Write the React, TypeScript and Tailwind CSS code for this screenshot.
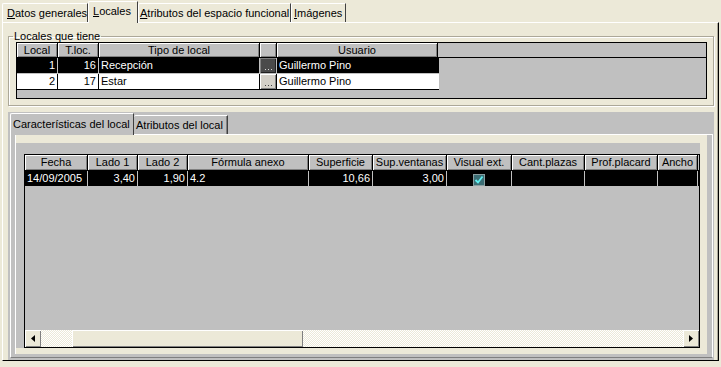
import React from "react";

const raised = "shadow-[inset_1px_1px_0_#ffffff,inset_-1px_-1px_0_#808080]";

const TOP_TABS = [
  { label: "Datos generales", w: "w-[86px] pl-[4px]", active: false },
  { label: "Locales", w: "w-[50px] pl-[4px]", active: true },
  { label: "Atributos del espacio funcional", w: "w-[153px] pl-[1px]", active: false },
  { label: "Imágenes", w: "w-[55px] pl-[2px]", active: false },
];

const LOCAL_COLS = [
  { label: "Local", w: "w-[41px]" },
  { label: "T.loc.", w: "w-[41px]" },
  { label: "Tipo de local", w: "w-[161px]" },
  { label: "", w: "w-[17px]" },
  { label: "Usuario", w: "w-[161px]" },
];

const LOCAL_ROWS = [
  { local: "1", tloc: "16", tipo: "Recepción", user: "Guillermo Pino", sel: true },
  { local: "2", tloc: "17", tipo: "Estar", user: "Guillermo Pino", sel: false },
];

const CAR_COLS = [
  { label: "Fecha", w: "w-[63px]", value: "14/09/2005", align: "text-left" },
  { label: "Lado 1", w: "w-[50px]", value: "3,40", align: "text-right" },
  { label: "Lado 2", w: "w-[50px]", value: "1,90", align: "text-right" },
  { label: "Fórmula anexo", w: "w-[121px]", value: "4.2", align: "text-left" },
  { label: "Superficie", w: "w-[64px]", value: "10,66", align: "text-right" },
  { label: "Sup.ventanas", w: "w-[74px]", value: "3,00", align: "text-right" },
  { label: "Visual ext.", w: "w-[65px]", value: "check", align: "text-center" },
  { label: "Cant.plazas", w: "w-[73px]", value: "", align: "text-left" },
  { label: "Prof.placard", w: "w-[73px]", value: "", align: "text-left" },
  { label: "Ancho", w: "w-[40px]", value: "", align: "text-left" },
];

function Underlined({ text }: { text: string }) {
  return (
    <>
      <span className="underline underline-offset-[1px]">{text[0]}</span>
      {text.slice(1)}
    </>
  );
}

function HeaderCell({ label, w }: { label: string; w: string }) {
  return (
    <div
      className={`${w} h-full shrink-0 overflow-hidden whitespace-nowrap border-r border-black bg-[#c0c0c0] text-center leading-[15px] ${raised}`}
    >
      {label}
    </div>
  );
}

function DotsButton({ dark }: { dark: boolean }) {
  const dot = dark ? "#d8d8d8" : "#404040";
  return (
    <div
      className={`flex h-full w-full items-end justify-center pb-[3px] ${
        dark
          ? "bg-[#4a4a4a] shadow-[inset_1px_1px_0_#808080,inset_-1px_-1px_0_#202020]"
          : "bg-[#d4d0c8] shadow-[inset_1px_1px_0_#ffffff,inset_-1px_-1px_0_#808080]"
      }`}
    >
      <svg width="7" height="1" viewBox="0 0 7 1">
        <rect x="0" y="0" width="1" height="1" fill={dot} />
        <rect x="3" y="0" width="1" height="1" fill={dot} />
        <rect x="6" y="0" width="1" height="1" fill={dot} />
      </svg>
    </div>
  );
}

function CheckMark() {
  return (
    <svg width="12" height="12" viewBox="0 0 12 12" className="inline-block">
      <rect x="0.5" y="0.5" width="11" height="11" fill="#3b6d74" stroke="#8a9ea0" />
      <path d="M2.5 6 L5 8.5 L9.5 2.5" fill="none" stroke="#5ff0f0" strokeWidth="1.8" />
    </svg>
  );
}

function ArrowButton({ dir }: { dir: "left" | "right" }) {
  return (
    <div className={`flex h-full w-[16px] shrink-0 items-center justify-center bg-[#ece9d8] ${raised}`}>
      <svg width="4" height="7" viewBox="0 0 4 7">
        {dir === "left" ? <path d="M4 0 L0 3.5 L4 7 Z" fill="#000" /> : <path d="M0 0 L4 3.5 L0 7 Z" fill="#000" />}
      </svg>
    </div>
  );
}

export default function App() {
  return (
    <div className="h-[367px] w-[721px] overflow-hidden bg-[#ece9d8] font-['Liberation_Sans',Arial,sans-serif] text-[11px] text-black">
      {/* Top tabs */}
      <div className="flex h-[22px] items-end pl-[2px]">
        {TOP_TABS.map((t) => (
          <div
            key={t.label}
            className={`${t.w} shrink-0 rounded-tl-[2px] border-l border-t border-r border-l-white border-t-white border-r-[#404040] leading-[16px] whitespace-nowrap ${
              t.active ? "relative z-10 -mb-px h-[22px] bg-[#ece9d8] pt-[1px]" : "h-[19px] pt-[1px]"
            }`}
          >
            <Underlined text={t.label} />
          </div>
        ))}
      </div>

      {/* Page */}
      <div className="mx-[2px] flex h-[339px] flex-col border-t border-l border-r border-b border-t-white border-l-white border-r-black border-b-black pl-[5px] pr-[4px] pt-[7px] shadow-[inset_-1px_0_0_#aca899]">
        {/* Locales que tiene */}
        <fieldset className="border border-[#aca899] pl-[7px] pr-[6px] pb-[6px] shadow-[inset_1px_1px_0_#ffffff,1px_1px_0_#ffffff]">
          <legend className="-ml-[3px] px-[1px] leading-[12px]">Locales que tiene</legend>
          <div className="h-[57px] border border-black bg-[#c0c0c0]">
            <div className="flex h-[15px] border-b border-black">
              {LOCAL_COLS.map((c, i) => (
                <HeaderCell key={i} label={c.label} w={c.w} />
              ))}
            </div>
            {LOCAL_ROWS.map((r) => (
              <div
                key={r.local}
                className={`flex h-[16px] w-[422px] border-b leading-[15px] ${
                  r.sel ? "border-[#c0c0c0] bg-black text-white" : "border-black bg-white text-black"
                }`}
              >
                <div className={`w-[41px] shrink-0 border-r pr-[2px] text-right ${r.sel ? "border-[#c0c0c0]" : "border-black"}`}>{r.local}</div>
                <div className={`w-[41px] shrink-0 border-r pr-[2px] text-right ${r.sel ? "border-[#c0c0c0]" : "border-black"}`}>{r.tloc}</div>
                <div className={`w-[161px] shrink-0 border-r pl-[2px] ${r.sel ? "border-[#c0c0c0]" : "border-black"}`}>{r.tipo}</div>
                <div className={`w-[17px] shrink-0 border-r ${r.sel ? "border-[#c0c0c0]" : "border-black"}`}>
                  <DotsButton dark={r.sel} />
                </div>
                <div className="w-[161px] shrink-0 pl-[2px]">{r.user}</div>
              </div>
            ))}
          </div>
        </fieldset>

        {/* Lower page control */}
        <div className="mt-[6px] flex flex-1 flex-col bg-[#c0c0c0] pt-[1px]">
          <div className="flex h-[21px] items-end pl-[2px]">
            <div className="relative z-10 -mb-px h-[22px] w-[124px] shrink-0 rounded-tl-[2px] border-l border-t border-r border-l-white border-t-white border-r-[#404040] bg-[#c0c0c0] pl-[2px] pt-[3px] leading-[15px] whitespace-nowrap">
              Características del local
            </div>
            <div className="h-[19px] w-[94px] shrink-0 rounded-tl-[2px] border-t border-r border-t-white border-r-[#404040] pl-[2px] pt-[2px] leading-[15px] whitespace-nowrap shadow-[inset_-1px_0_0_#808080]">
              Atributos del local
            </div>
          </div>

          <div className="ml-[2px] mr-[1px] mb-[2px] flex flex-1 flex-col border-t border-l border-r border-b border-t-white border-l-white border-r-white border-b-[#808080] pl-[4px] pr-[5px] pb-[3px]">
            <div className="flex flex-1 flex-col border-l border-white bg-[#ece9d8] pt-[8px] pr-[7px] pb-[6px]">
              <div className="flex flex-1 flex-col bg-[#c0c0c0] pl-[8px] pt-[11px]">
                <div className="flex flex-1 flex-col overflow-hidden border border-black">
                  <div className="flex h-[16px] shrink-0 border-b border-black">
                    {CAR_COLS.map((c) => (
                      <HeaderCell key={c.label} label={c.label} w={c.w} />
                    ))}
                  </div>
                  <div className="flex h-[16px] shrink-0 border-b border-[#c0c0c0] bg-black leading-[15px] text-white">
                    {CAR_COLS.map((c) => (
                      <div key={c.label} className={`${c.w} shrink-0 border-r border-[#c0c0c0] px-[2px] ${c.align}`}>
                        {c.value === "check" ? (
                          <span className="inline-block pt-[1px]">
                            <CheckMark />
                          </span>
                        ) : (
                          c.value
                        )}
                      </div>
                    ))}
                  </div>
                  <div className="flex-1" />
                  {/* Horizontal scrollbar */}
                  <div className="flex h-[17px] shrink-0 bg-[repeating-conic-gradient(#ffffff_0_25%,#ece9d8_0_50%)] bg-[length:2px_2px]">
                    <ArrowButton dir="left" />
                    <div className="w-[31px] shrink-0" />
                    <div className={`w-[231px] shrink-0 bg-[#ece9d8] ${raised}`} />
                    <div className="flex-1" />
                    <ArrowButton dir="right" />
                  </div>
                </div>
              </div>
            </div>
          </div>
        </div>
      </div>
    </div>
  );
}
